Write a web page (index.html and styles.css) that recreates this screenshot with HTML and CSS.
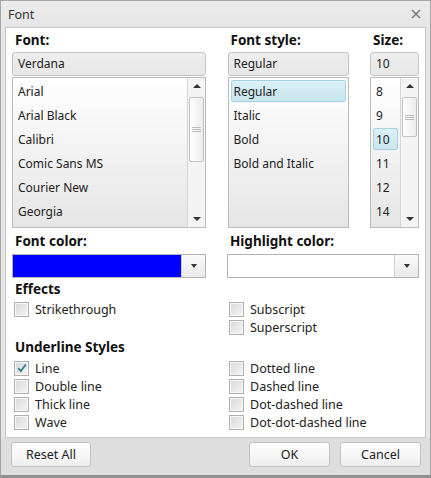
FILE: index.html
```html
<!DOCTYPE html>
<html>
<head>
<meta charset="utf-8">
<link rel="stylesheet" href="styles.css">
</head>
<body>
<div class="dialog">
  <div class="titlebar">
    <span class="title">Font</span>
    <svg class="close" width="10" height="10" viewBox="0 0 10 10"><path d="M1 1 L9 9 M9 1 L1 9" stroke="#777" stroke-width="1.5" fill="none"/></svg>
  </div>
  <div class="panel">
    <div class="pickers">
      <div class="col col-font">
        <div class="label">Font:</div>
        <div class="input">Verdana</div>
        <div class="list">
          <div class="items">
            <div class="item">Arial</div>
            <div class="item">Arial Black</div>
            <div class="item">Calibri</div>
            <div class="item">Comic Sans MS</div>
            <div class="item">Courier New</div>
            <div class="item">Georgia</div>
          </div>
          <div class="scrollbar">
            <div class="arrow up"></div>
            <div class="track"><div class="thumb thumb-long"><span class="grip"></span></div></div>
            <div class="arrow down"></div>
          </div>
        </div>
      </div>
      <div class="col col-style">
        <div class="label">Font style:</div>
        <div class="input">Regular</div>
        <div class="list">
          <div class="items">
            <div class="item selected">Regular</div>
            <div class="item">Italic</div>
            <div class="item">Bold</div>
            <div class="item">Bold and Italic</div>
          </div>
        </div>
      </div>
      <div class="col col-size">
        <div class="label">Size:</div>
        <div class="input">10</div>
        <div class="list">
          <div class="items">
            <div class="item">8</div>
            <div class="item">9</div>
            <div class="item selected">10</div>
            <div class="item">11</div>
            <div class="item">12</div>
            <div class="item">14</div>
          </div>
          <div class="scrollbar">
            <div class="arrow up"></div>
            <div class="track"><div class="thumb thumb-short"><span class="grip"></span></div></div>
            <div class="arrow down"></div>
          </div>
        </div>
      </div>
    </div>

    <div class="colors">
      <div class="colorcol">
        <div class="label">Font color:</div>
        <div class="picker">
          <div class="swatch swatch-blue"></div>
          <div class="drop"><span class="caret"></span></div>
        </div>
      </div>
      <div class="colorcol">
        <div class="label">Highlight color:</div>
        <div class="picker">
          <div class="swatch"></div>
          <div class="drop"><span class="caret"></span></div>
        </div>
      </div>
    </div>

    <div class="label section">Effects</div>
    <div class="checks">
      <div class="checkcol">
        <label class="check"><span class="box"></span>Strikethrough</label>
      </div>
      <div class="checkcol">
        <label class="check"><span class="box"></span>Subscript</label>
        <label class="check"><span class="box"></span>Superscript</label>
      </div>
    </div>

    <div class="label section">Underline Styles</div>
    <div class="checks checks-under">
      <div class="checkcol">
        <label class="check"><span class="box checked"><svg width="10" height="10" viewBox="0 0 10 10"><path d="M1.2 5.2 L3.8 8 L8.8 1.5" stroke="#2f7d96" stroke-width="1.8" fill="none"/></svg></span>Line</label>
        <label class="check"><span class="box"></span>Double line</label>
        <label class="check"><span class="box"></span>Thick line</label>
        <label class="check"><span class="box"></span>Wave</label>
      </div>
      <div class="checkcol">
        <label class="check"><span class="box"></span>Dotted line</label>
        <label class="check"><span class="box"></span>Dashed line</label>
        <label class="check"><span class="box"></span>Dot-dashed line</label>
        <label class="check"><span class="box"></span>Dot-dot-dashed line</label>
      </div>
    </div>
  </div>
  <div class="footer">
    <button class="btn btn-reset">Reset All</button>
    <div class="spacer"></div>
    <button class="btn">OK</button>
    <button class="btn">Cancel</button>
  </div>
</div>
</body>
</html>
```

FILE: styles.css
```css
* { box-sizing: border-box; }
html, body { margin: 0; padding: 0; background: #ffffff; }
body {
  font-family: "Noto Sans", "Open Sans", sans-serif;
  font-size: 12px;
  color: #222;
}
.dialog {
  width: 431px;
  height: 478px;
  border: 1px solid #a5a5a5;
  border-bottom: 3px solid #8f8f8f;
  background: #e6e6e6;
  display: flex;
  flex-direction: column;
}
.titlebar {
  height: 26px;
  display: flex;
  align-items: center;
  justify-content: space-between;
  padding: 0 9px 0 7px;
  background: linear-gradient(#ececec, #e6e6e6);
}
.title { font-size: 12.5px; color: #333; }
.close { display: block; }
.panel {
  margin: 0 4px;
  border: 1px solid #c6c6c6;
  background: #fff;
  padding: 3px 6px 5px 6px;
  height: 411px;
}
.label {
  height: 18px;
  line-height: 18px;
  font-weight: bold;
  font-size: 13.5px;
  color: #111;
  padding-left: 3px;
}
.pickers {
  display: flex;
  justify-content: space-between;
}
.col-font { width: 194px; }
.col-style { width: 121px; }
.col-size { width: 49px; }
.col .label { margin-bottom: 3px; }
.input {
  height: 24px;
  line-height: 22px;
  border: 1px solid #c4c4c4;
  border-radius: 3px;
  background: linear-gradient(#eeeeee, #e7e7e7);
  padding-left: 5px;
  margin-bottom: 1px;
}
.list {
  height: 151px;
  border: 1px solid #bcbcbc;
  background: linear-gradient(#ffffff, #e6e6e6);
  display: flex;
  overflow: hidden;
}
.items { flex: 1; margin-top: -0.5px; }
.item {
  height: 22px;
  line-height: 22px;
  margin: 2px 2px 0.3px 2px;
  border: 1px solid transparent;
  border-radius: 2px;
  padding-left: 2px;
}
.selected {
  background: linear-gradient(#dcf0f7, #c9e6f0);
  border-color: #a6d3e2;
}
.scrollbar {
  width: 18px;
  border-left: 1px solid #d6d6d6;
  background: #f4f4f4;
  display: flex;
  flex-direction: column;
}
.arrow {
  height: 17px;
  position: relative;
}
.arrow::after {
  content: "";
  position: absolute;
  left: 5px;
  top: 6px;
  border-left: 4px solid transparent;
  border-right: 4px solid transparent;
}
.arrow.up::after { border-bottom: 4px solid #333; }
.arrow.down::after { border-top: 4px solid #333; top: 7px; }
.track { flex: 1; padding: 2px 1px; }
.thumb {
  border: 1px solid #c2c2c2;
  border-radius: 2px;
  background: linear-gradient(90deg, #ffffff, #ececec);
  display: flex;
  align-items: center;
  justify-content: center;
}
.thumb-long { height: 65px; }
.thumb-short { height: 40px; }
.grip {
  width: 9px;
  height: 5px;
  border-top: 1px solid #bcbcbc;
  border-bottom: 1px solid #bcbcbc;
  position: relative;
}
.grip::after {
  content: "";
  position: absolute;
  left: 0; right: 0; top: 1px;
  border-top: 1px solid #bcbcbc;
}
.colors {
  display: flex;
  justify-content: space-between;
  margin-top: 4px;
}
.colorcol { width: 194px; }
.colorcol:last-child { width: 192px; }
.colorcol .label { margin-bottom: 4px; }
.picker {
  height: 24px;
  border: 1px solid #b3b3b3;
  display: flex;
  background: #fff;
}
.swatch { flex: 1; }
.swatch-blue { background: #0000ff; }
.drop {
  width: 24px;
  border-left: 1px solid #cfcfcf;
  background: linear-gradient(#fafafa, #e9e9e9);
  display: flex;
  align-items: center;
  justify-content: center;
}
.caret {
  border-left: 3px solid transparent;
  border-right: 3px solid transparent;
  border-top: 4px solid #333;
}
.section { margin-top: 2px; }
.checks {
  display: flex;
  justify-content: space-between;
  margin-top: 2px;
}
.checks-under { margin-top: 3px; }
.checkcol { width: 194px; display: flex; flex-direction: column; }
.checkcol:last-child { width: 192px; }
.check {
  height: 18px;
  display: flex;
  align-items: center;
  gap: 6px;
  padding-left: 2px;
  font-size: 12.5px;
}
.box {
  width: 15px;
  height: 15px;
  border: 1px solid #b0b0b0;
  background: linear-gradient(135deg, #d9d9d9, #f4f4f4);
  box-shadow: inset 0 0 0 1px #f7f7f7;
  display: flex;
  align-items: center;
  justify-content: center;
}
.footer {
  flex: 1;
  display: flex;
  align-items: flex-start;
  padding: 4px 9px 0 10px;
  gap: 10px;
  background: #dedede;
}
.spacer { flex: 1; }
.btn {
  width: 81px;
  height: 25px;
  border: 1px solid #c3c3c3;
  border-radius: 3px;
  background: linear-gradient(#ffffff, #eeeeee);
  font-family: "Noto Sans", "Open Sans", sans-serif;
  font-size: 12.5px;
  color: #222;
  padding: 0;
}
.btn-reset { width: 80px; }
```
